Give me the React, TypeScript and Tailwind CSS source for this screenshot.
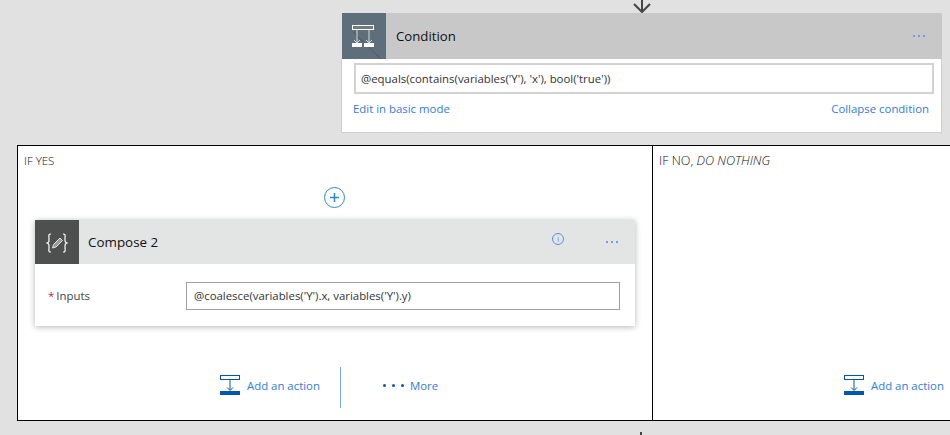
import React from "react";

const font = "font-['Open_Sans','Noto_Sans',sans-serif]";

const ConditionIcon = () => (
  <svg width="44" height="46" viewBox="0 0 44 46" fill="none">
    <line x1="11" y1="19" x2="39" y2="46" stroke="#4f5a65" strokeWidth="1" />
    <rect x="10.5" y="12.5" width="21" height="4" stroke="#fff" fill="#6f7c88" />
    <path d="M15 17v13M27 17v13M12 27l3 3 3-3M24 27l3 3 3-3" stroke="#d5d9dd" strokeWidth="1" />
    <rect x="10" y="30" width="10" height="4" fill="#fff" />
    <rect x="22" y="30" width="10" height="4" fill="#fff" />
  </svg>
);

const ComposeIcon = () => (
  <svg width="44" height="44" viewBox="0 0 44 44" fill="none">
    <path d="M16 14c-3 0-2 2-2 5s0 3-2 4c2 1 2 1 2 4s-1 5 2 5" stroke="#fff" strokeWidth="1.2" />
    <path d="M28 14c3 0 2 2 2 5s0 3 2 4c-2 1-2 1-2 4s1 5-2 5" stroke="#fff" strokeWidth="1.2" />
    <path d="M17.5 28l1-3.5 6.5-6.5 2.5 2.5-6.5 6.5z" fill="#9a9b9b" stroke="#e0e0e0" strokeWidth="1" />
  </svg>
);

const AddIcon = () => (
  <svg width="20" height="20" viewBox="0 0 20 20" fill="none" className="shrink-0">
    <rect x="0.5" y="0.5" width="19" height="4" stroke="#0058ad" />
    <path d="M10 5v10M7 12.5l3 3 3-3" stroke="#0058ad" />
    <rect x="0" y="16" width="20" height="4" fill="#0058ad" />
  </svg>
);

const Arrow = () => (
  <svg width="20" height="13" viewBox="0 0 20 13" fill="none" className="ml-[1px]">
    <path d="M10 0v12M2 4l8 8 8-8" stroke="#444" strokeWidth="2" />
  </svg>
);

const Dots = ({ className }: { className: string }) => (
  <span className={`flex gap-[3px] ${className}`}>
    <span className="w-[2px] h-[2px] bg-[#6a9cf5]" />
    <span className="w-[2px] h-[2px] bg-[#6a9cf5]" />
    <span className="w-[2px] h-[2px] bg-[#6a9cf5]" />
  </span>
);

export default function App() {
  return (
    <div className={`${font} w-[950px] h-[435px] overflow-hidden bg-[#e1e1e1] text-[11.4px] text-[#333]`}>
      <div className="ml-[341px] w-[601px]">
        <div className="h-[13px] flex justify-center">
          <Arrow />
        </div>
        <div className="h-[120px] bg-white border border-[#cfcfcf] border-t-0">
          <div className="h-[46px] bg-[#c8c8c8] flex items-center -ml-px -mr-px">
            <div className="w-[45px] h-[46px] bg-[#5f6e7b] border-l border-[#e1e1e1]">
              <ConditionIcon />
            </div>
            <span className="ml-[10px] mt-[2px] text-[13.2px] text-[#111]">Condition</span>
            <Dots className="ml-auto mr-[17px]" />
          </div>
          <div className="ml-[12px] mr-[7px] mt-[4px] h-[31px] border-2 border-[#d2d2d2] flex items-center pl-[5px]">
            @equals(contains(variables('Y'), 'x'), bool('true'))
          </div>
          <div className="mx-[11px] mt-[6px] flex justify-between text-[#2f7de1] pr-[1px]">
            <span>Edit in basic mode</span>
            <span>Collapse condition</span>
          </div>
        </div>
      </div>

      <div className="ml-[17px] mt-[12px] w-[950px] h-[276px] border border-black bg-white flex">
        <div className="w-[635px] border-r border-black relative flex flex-col">
          <div className="pl-[6px] pt-[6px] h-[28px] text-[11.5px] font-light text-[#111]">IF YES</div>
          <div className="flex justify-center h-[46px] pt-[13px] pr-px">
            <div className="w-[21px] h-[21px] rounded-full border-[1.5px] border-[#2b88d8] flex items-center justify-center">
              <svg width="11" height="11" viewBox="0 0 11 11" fill="none">
                <path d="M5.5 1v9M1 5.5h9" stroke="#2b88d8" strokeWidth="1.5" />
              </svg>
            </div>
          </div>
          <div className="ml-[17px] w-[600px] h-[106px] bg-white shadow-[0_1px_6px_rgba(0,0,0,0.3)]">
            <div className="h-[44px] bg-[#e3e4e4] flex items-center">
              <div className="w-[44px] h-[44px] bg-[#4e4f4f]">
                <ComposeIcon />
              </div>
              <span className="ml-[9px] text-[13.4px] text-[#111]">Compose 2</span>
              <div className="ml-auto mr-[42px] mb-[6px] w-[12px] h-[12px] rounded-full border border-[#5b8ff0] flex items-center justify-center text-[8px] leading-none text-[#5b8ff0]">
                i
              </div>
              <Dots className="mr-[17px] mb-[1px]" />
            </div>
            <div className="mt-[18px] flex items-center">
              <span className="ml-[13px] w-[138px] text-[#444]">
                <span className="text-[#c2185b] mr-[2px]">*</span>Inputs
              </span>
              <div className="w-[434px] h-[28px] border border-[#a0a0a0] flex items-center pl-[7px]">
                @coalesce(variables('Y').x, variables('Y').y)
              </div>
            </div>
          </div>
          <div className="mt-[41px] flex items-center h-[41px] text-[#2f7de1]">
            <div className="ml-[202px] mb-[5px] flex items-center gap-[7px]">
              <AddIcon />
              <span className="mt-[2px]">Add an action</span>
            </div>
            <div className="ml-[20px] w-px h-[41px] bg-[#7fa9ee]" />
            <div className="ml-[42px] mb-[5px] flex gap-[6px] items-center">
              <span className="w-[3px] h-[3px] rounded-full bg-[#0058ad]" />
              <span className="w-[3px] h-[3px] rounded-full bg-[#0058ad]" />
              <span className="w-[3px] h-[3px] rounded-full bg-[#0058ad]" />
            </div>
            <span className="ml-[6px] mb-[3px]">More</span>
          </div>
        </div>
        <div className="flex-1 flex flex-col">
          <div className="pl-[6px] pt-[6px] h-[229px] text-[12.6px] font-light text-[#111]">
            IF NO, <em>DO NOTHING</em>
          </div>
          <div className="flex items-center gap-[7px] ml-[191px] text-[#2f7de1]">
            <AddIcon />
            <span className="mt-[2px]">Add an action</span>
          </div>
        </div>
      </div>

      <div className="ml-[640px] mt-[11px] w-[2px] h-[4px] bg-[#444]" />
    </div>
  );
}
